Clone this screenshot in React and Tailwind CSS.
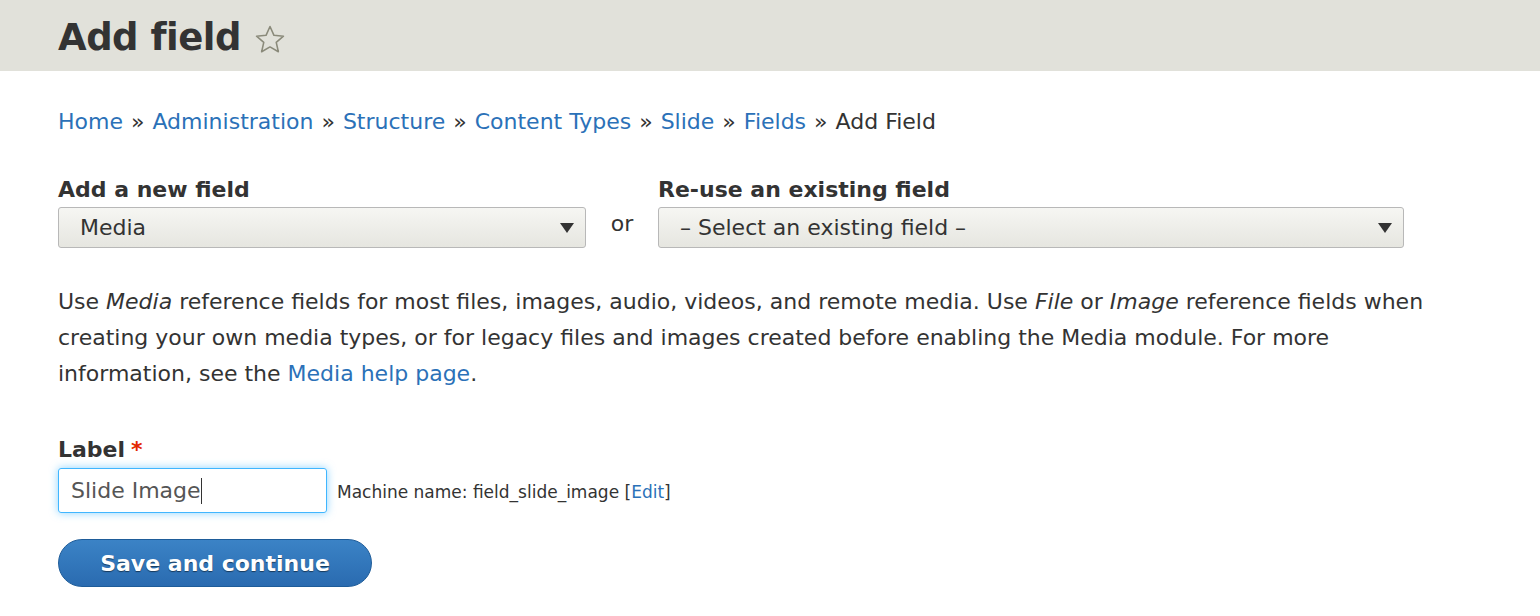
import React from 'react';

const font = { fontFamily: '"DejaVu Sans", "Noto Sans", sans-serif' };

const Caret = () => (
  <svg width="16" height="12" viewBox="0 0 16 12" className="shrink-0">
    <path d="M1 1h14L8 11z" fill="#333" />
  </svg>
);

const App = () => {
  const crumbs = ['Home', 'Administration', 'Structure', 'Content Types', 'Slide', 'Fields'];
  return (
    <div className="min-h-screen bg-white text-[#333] text-[22px]" style={font}>
      <div className="bg-[#e1e1da] h-[71px] flex items-center px-[58px] gap-3 pt-[4px]">
        <h1 className="text-[37px] font-bold text-[#333] tracking-[-0.5px]">Add field</h1>
        <svg width="34" height="34" viewBox="0 0 24 24" className="mt-1">
          <path d="M12 2.5l2.8 6.2 6.7.6-5.1 4.4 1.5 6.6L12 16.9l-5.9 3.4 1.5-6.6-5.1-4.4 6.7-.6z" fill="none" stroke="#8a8a7a" strokeWidth="1.1" strokeLinejoin="round" />
        </svg>
      </div>

      <div className="px-[58px]">
        <div className="mt-[34px] h-[32px] flex items-center">
          {crumbs.map((c) => (
            <span key={c}>
              <a className="text-[#2b71b8]">{c}</a>
              <span className="mx-[8px]">»</span>
            </span>
          ))}
          <span>Add Field</span>
        </div>

        <div className="mt-[36px] flex items-end">
          <div>
            <div className="font-bold h-[34px]">Add a new field</div>
            <div className="w-[528px] h-[41px] border border-[#b8b8b8] rounded-[3px] bg-gradient-to-b from-[#f6f6f3] to-[#e6e6e0] flex items-center justify-between pl-[21px] pr-[10px]">
              <span>Media</span>
              <Caret />
            </div>
          </div>
          <div className="w-[72px] h-[41px] flex items-center justify-center pb-2">or</div>
          <div>
            <div className="font-bold h-[34px]">Re-use an existing field</div>
            <div className="w-[746px] h-[41px] border border-[#b8b8b8] rounded-[3px] bg-gradient-to-b from-[#f6f6f3] to-[#e6e6e0] flex items-center justify-between pl-[21px] pr-[10px]">
              <span>– Select an existing field –</span>
              <Caret />
            </div>
          </div>
        </div>

        <p className="mt-[36px] leading-[36px] max-w-[1400px]">
          Use <em>Media</em> reference fields for most files, images, audio, videos, and remote media. Use <em>File</em> or <em>Image</em> reference fields when creating your own media types, or for legacy files and images created before enabling the Media module. For more information, see the <a className="text-[#2b71b8]">Media help page</a>.
        </p>

        <div className="mt-[42px] font-bold h-[30px] flex items-center">
          Label <span className="text-[#e32700] ml-[6px]">*</span>
        </div>
        <div className="mt-[4px] flex items-center">
          <div className="w-[269px] h-[45px] border border-[#40b6ff] rounded-[3px] shadow-[0_0_8px_rgba(64,182,255,0.6)] flex items-center pl-[12px] text-[#555]">
            Slide Image<span className="inline-block w-px h-[26px] bg-[#333]"></span>
          </div>
          <span className="ml-[10px] text-[17px] mt-1">
            Machine name: field_slide_image [<a className="text-[#2b71b8]">Edit</a>]
          </span>
        </div>

        <button className="mt-[26px] w-[314px] h-[48px] rounded-full bg-gradient-to-b from-[#3b83c6] to-[#2a6bb0] border border-[#1e5c99] text-white font-bold text-[22px] [text-shadow:0_1px_1px_rgba(0,0,0,0.5)]">
          Save and continue
        </button>
      </div>
    </div>
  );
};

export default App;
